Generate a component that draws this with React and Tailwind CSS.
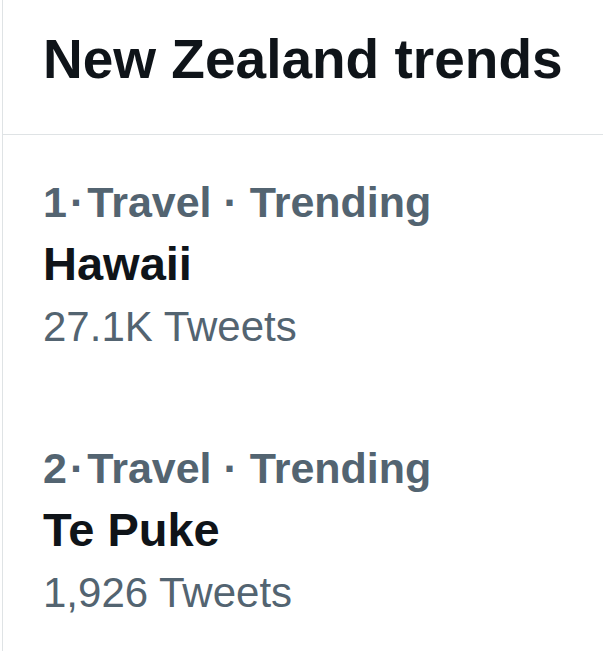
import React from 'react';

const trends = [
  { rank: 1, category: 'Travel · Trending', name: 'Hawaii', count: '27.1K Tweets' },
  { rank: 2, category: 'Travel · Trending', name: 'Te Puke', count: '1,926 Tweets' },
];

const TrendRow = ({ trend }) => {
  return (
    <div className="pl-[40px] pr-6 pt-[37px] pb-[43px]">
      {/* Meta line */}
      <div className="flex text-[43px] leading-[60px] font-bold text-[#536471] whitespace-nowrap">
        <span>{trend.rank}</span>
        <span className="mx-[3px]">·</span>
        <span>{trend.category}</span>
      </div>
      {/* Trend name */}
      <div className="text-[47px] leading-[63px] font-bold text-[#0f1419] whitespace-nowrap">
        {trend.name}
      </div>
      {/* Tweet count */}
      <div className="text-[42px] leading-[63px] text-[#536471] whitespace-nowrap">
        {trend.count}
      </div>
    </div>
  );
};

const App = () => {
  return (
    <div
      className="w-[603px] h-[651px] overflow-hidden bg-white"
      style={{ fontFamily: '"Liberation Sans", Arial, sans-serif' }}
    >
      <div className="ml-[2px] h-full border-l border-[#dfe3e5]">
        {/* Header */}
        <div className="pl-[40px] pt-[27px] pb-[43px] border-b border-[#dfe3e5]">
          <h2 className="text-[55px] leading-[64px] font-bold text-[#0f1419] whitespace-nowrap">
            New Zealand trends
          </h2>
        </div>

        {/* Trends list */}
        {trends.map((t) => (
          <TrendRow key={t.rank} trend={t} />
        ))}
      </div>
    </div>
  );
};

export default App;
